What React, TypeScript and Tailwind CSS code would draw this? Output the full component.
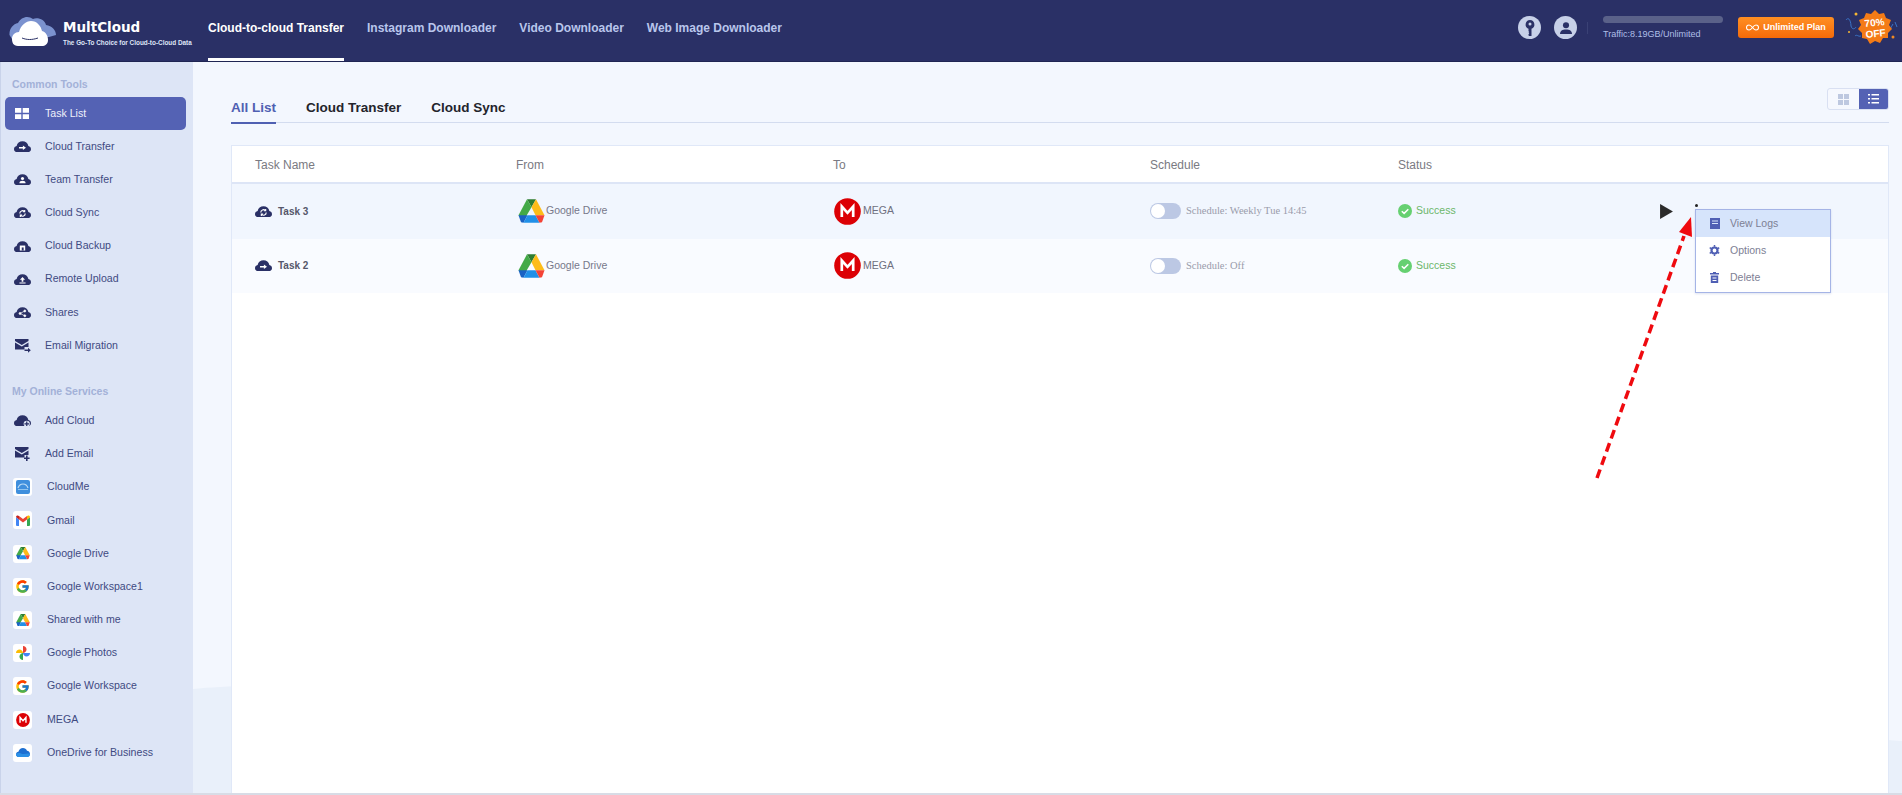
import React from "react";
import { FcGoogle } from "react-icons/fc";

const NAVY = "#2a3066";

function CloudIcon({ kind }: { kind: string }) {
  const cloud = "M4 15C1.800 15 0 13.400 0 11.200 0 9.200 1.400 7.600 3.400 7.200 4 3.400 7.200 1 11 1s7 2.400 7.600 6.200c2 .4 3.400 2 3.400 4 0 2.200-1.800 3.800-4 3.800z";
  return (
    <svg width="17" height="13" viewBox="0 0 22 15.500" className="shrink-0">
      <path d={cloud} fill={NAVY} />
      {kind === "transfer" && <path d="M6.500 8.300h5V6.300l4 3-4 3v-2h-5z" fill="#fff" />}
      {kind === "team" && (
        <g fill="#fff">
          <circle cx="11" cy="6.500" r="2" />
          <path d="M7 12.500c0-2 1.800-3 4-3s4 1 4 3z" />
        </g>
      )}
      {kind === "sync" && (
        <g fill="none" stroke="#fff" strokeWidth="1.500">
          <path d="M7.500 9a3.500 3.500 0 0 1 6-2.500" />
          <path d="M14.500 9a3.500 3.500 0 0 1-6 2.500" />
          <path d="M13.800 4.500v2.300h-2.300M8.200 13.500v-2.300h2.300" />
        </g>
      )}
      {kind === "backup" && (
        <g>
          <path d="M7.500 6.500h7v6.500h-7z" fill="#fff" />
          <path d="M10 9h2.500v4H10z" fill={NAVY} />
        </g>
      )}
      {kind === "upload" && <path d="M11 4.500l3.300 3.500h-2.200v2.500h-2.200V8H7.700zM7 11.500h8v1.300H7z" fill="#fff" />}
      {kind === "share" && (
        <g fill="#fff" stroke="#fff" strokeWidth=".9">
          <circle cx="7.800" cy="9" r="1.300" />
          <circle cx="14" cy="5.800" r="1.300" />
          <circle cx="14" cy="12" r="1.300" />
          <path d="M7.800 9L14 5.800M7.800 9L14 12" fill="none" />
        </g>
      )}
      {kind === "add" && (
        <g>
          <circle cx="16.500" cy="12" r="4" fill="#dde5f6" />
          <path d="M15.700 9h1.600v2.200h2.200v1.600h-2.200V15h-1.600v-2.200h-2.200v-1.600h2.200z" fill={NAVY} />
        </g>
      )}
    </svg>
  );
}

function MailIcon({ plus }: { plus?: boolean }) {
  return (
    <svg width="17" height="14" viewBox="0 0 17 14" className="shrink-0">
      <path d="M1 0h13.500v2L7.800 6 1 2zM1 3.600l6.800 4 6.700-4V8h-4v2.500H1z" fill={NAVY} />
      {plus ? (
        <path d="M12 8.500h1.600v2h2v1.500h-2v2H12v-2h-2v-1.500h2z" fill={NAVY} />
      ) : (
        <path d="M10.500 10.500h3.500V8.800l2.800 2.500-2.800 2.500v-1.700h-3.500z" fill={NAVY} />
      )}
    </svg>
  );
}

function DriveIcon({ size = 14 }: { size?: number }) {
  return (
    <svg width={size} height={size * 0.9} viewBox="0 0 27 24" className="shrink-0">
      <polygon points="9,0 18,0 13.500,8" fill="#2e7d32" />
      <polygon points="9,0 13.500,8 5.500,21.500 0.500,16" fill="#43a947" />
      <polygon points="18,0 26.500,16 17.500,16 13.500,8" fill="#fdbc19" />
      <polygon points="0.500,16 9.500,16 5.500,23.500 3,23" fill="#1a62c4" />
      <polygon points="9.500,16 17.500,16 21.500,23.500 5.500,23.500" fill="#2190e8" />
      <polygon points="17.500,16 26.500,16 24,23 21.500,23.500" fill="#f44336" />
    </svg>
  );
}

function MegaIcon({ size = 27 }: { size?: number }) {
  return (
    <svg width={size} height={size} viewBox="0 0 27 27" className="shrink-0">
      <circle cx="13.500" cy="13.500" r="13.300" fill="#dc0005" />
      <path d="M7.800 19V8.500l5.700 6.300 5.700-6.300V19" fill="none" stroke="#fff" strokeWidth="2.700" />
    </svg>
  );
}

function GmailIcon() {
  return (
    <svg width="14" height="11" viewBox="0 0 14 11">
      <path d="M0 2v8a1 1 0 0 0 1 1h2V4.500z" fill="#4285f4" />
      <path d="M14 2v8a1 1 0 0 1-1 1h-2V4.500z" fill="#34a853" />
      <path d="M3 4.500L7 7.500l4-3V1l-4 3L3 1z" fill="#ea4335" />
      <path d="M0 2c0-1.500 1.800-2 3-1v3.500z" fill="#c5221f" />
      <path d="M14 2c0-1.500-1.800-2-3-1v3.500z" fill="#fbbc04" />
    </svg>
  );
}

function PhotosIcon() {
  return (
    <svg width="14" height="14" viewBox="0 0 14 14">
      <path d="M7 7V0c2 0 3.500 1.500 3.500 3.500S8.500 7 7 7z" fill="#ea4335" />
      <path d="M7 7h7c0 2-1.500 3.500-3.500 3.500S7 8.500 7 7z" fill="#4285f4" />
      <path d="M7 7v7c-2 0-3.500-1.500-3.500-3.500S5.500 7 7 7z" fill="#34a853" />
      <path d="M7 7H0c0-2 1.500-3.500 3.500-3.500S7 5.500 7 7z" fill="#fbbc04" />
    </svg>
  );
}

function OneDriveIcon() {
  return (
    <svg width="14" height="9" viewBox="0 0 14 9">
      <path d="M3 9C1.300 9 0 7.900 0 6.400 0 5 1.100 4 2.400 3.800 3 1.600 4.700 0 7 0c1.800 0 3.300 1 4 2.700 1.700 .1 3 1.600 3 3.200C14 7.700 12.600 9 11 9z" fill="#1d6fd1" />
      <path d="M0 6.400C0 7.900 1.300 9 3 9h8c1.600 0 3-1.300 3-3.100-3-1-6 1-9-.5-2-.8-4-.5-5 .6z" fill="#2b8fe6" />
    </svg>
  );
}

function CloudMeIcon() {
  return (
    <svg width="14" height="14" viewBox="0 0 14 14">
      <rect width="14" height="14" rx="2" fill="#3f8fdd" />
      <path d="M2 8c1-3 3.500-4 5-4s4 1 5 4" fill="none" stroke="#bcdcf5" strokeWidth="1.200" />
      <path d="M2 9.500h10" stroke="#8fc3ee" strokeWidth="1" />
    </svg>
  );
}

type Item = { label: string; icon: React.ReactNode; white?: boolean };

const common: Item[] = [
  { label: "Cloud Transfer", icon: <CloudIcon kind="transfer" /> },
  { label: "Team Transfer", icon: <CloudIcon kind="team" /> },
  { label: "Cloud Sync", icon: <CloudIcon kind="sync" /> },
  { label: "Cloud Backup", icon: <CloudIcon kind="backup" /> },
  { label: "Remote Upload", icon: <CloudIcon kind="upload" /> },
  { label: "Shares", icon: <CloudIcon kind="share" /> },
  { label: "Email Migration", icon: <MailIcon /> },
];

const services: Item[] = [
  { label: "Add Cloud", icon: <CloudIcon kind="add" /> },
  { label: "Add Email", icon: <MailIcon plus /> },
  { label: "CloudMe", icon: <CloudMeIcon />, white: true },
  { label: "Gmail", icon: <GmailIcon />, white: true },
  { label: "Google Drive", icon: <DriveIcon />, white: true },
  { label: "Google Workspace1", icon: <FcGoogle size={15} />, white: true },
  { label: "Shared with me", icon: <DriveIcon />, white: true },
  { label: "Google Photos", icon: <PhotosIcon />, white: true },
  { label: "Google Workspace", icon: <FcGoogle size={15} />, white: true },
  { label: "MEGA", icon: <MegaIcon size={14} />, white: true },
  { label: "OneDrive for Business", icon: <OneDriveIcon />, white: true },
];

function SideRow({ item }: { item: Item }) {
  return (
    <div className="flex h-[33.200px] items-center pl-[12px] text-[10.600px] text-[#3f4a82]">
      {item.white ? (
        <span className="mr-[15px] flex h-[18px] w-[19px] items-center justify-center rounded-[3px] bg-white">{item.icon}</span>
      ) : (
        <span className="mr-[14px] flex w-[18px] justify-center">{item.icon}</span>
      )}
      <span>{item.label}</span>
    </div>
  );
}

function Check() {
  return (
    <svg width="14" height="14" viewBox="0 0 14 14" className="shrink-0">
      <circle cx="7" cy="7" r="7" fill="#66d071" />
      <path d="M3.800 7.200l2.300 2.200 4.200-4.200" fill="none" stroke="#fff" strokeWidth="1.500" />
    </svg>
  );
}

function TaskRow({ name, kind, schedule, bg, children }: { name: string; kind: string; schedule: string; bg: string; children?: React.ReactNode }) {
  return (
    <div className={`relative grid h-[54.500px] grid-cols-[261px_317px_317px_248px_262px_1fr] items-center pl-[23px] ${bg}`}>
      <div className="flex items-center gap-[6px] text-[10px] font-bold text-[#55576a]">
        <CloudIcon kind={kind} />
        <span>{name}</span>
      </div>
      <div className="flex items-center pl-[2px] text-[10.500px] text-[#77788a]">
        <DriveIcon size={27} />
        <span className="ml-[1px]">Google Drive</span>
      </div>
      <div className="flex items-center pl-[1px] text-[10.500px] text-[#6f7080]">
        <MegaIcon />
        <span className="ml-[2px]">MEGA</span>
      </div>
      <div className="flex items-center gap-[5px] font-['Liberation_Serif',serif] text-[10.500px] text-[#9a9cab]">
        <span className="flex h-[16px] w-[31px] items-center rounded-full bg-[#bcc8e4] pl-[1px]">
          <span className="h-[14px] w-[14px] rounded-full bg-white" />
        </span>
        <span>{schedule}</span>
      </div>
      <div className="flex items-center gap-[4px] text-[10.500px] text-[#6cb76a]">
        <Check />
        <span>Success</span>
      </div>
      {children}
    </div>
  );
}

function MenuRow({ label, icon, active }: { label: string; icon: React.ReactNode; active?: boolean }) {
  return (
    <div className={`flex h-[27px] items-center pl-[13px] text-[10.500px] text-[#7d8094] ${active ? "bg-[#d6e4fb]" : ""}`}>
      <span className="mr-[10px] flex w-[11px] justify-center">{icon}</span>
      <span>{label}</span>
    </div>
  );
}

export default function App() {
  return (
    <div className="relative flex h-[795px] w-[1902px] flex-col overflow-hidden border-b-2 border-[#d8dce6] bg-[#f3f7fe] font-['Liberation_Sans',Arial,sans-serif]">
      <header className="flex h-[62px] shrink-0 items-center border-b border-[#1f2553] bg-[#2a3066]">
        <div className="flex w-[208px] shrink-0 items-center pl-[9px]">
          <svg width="48" height="31" viewBox="0 0 48 31" className="mr-[6px] mt-[2px] shrink-0">
            <path d="M0.500 19C0 13 4 8 9 7 12 1 19-1 24 3 29 1 36 4 37 9 43 10 47 14 47 19L40 21 3 23z" fill="#7b92cf" />
            <path d="M9 30C4 30 3 26 3 23 3 19 6 16 10 16 12 9 17 5 22 5 28 5 32 10 33 15 37 16 39 20 39 24 39 28 36 30 33 30z" fill="#fff" />
            <path d="M13 22c5 2 10 2 16 0" fill="none" stroke="#2a3066" strokeWidth="1" />
          </svg>
          <div className="mt-[5px] flex flex-col whitespace-nowrap text-white">
            <span className="font-['DejaVu_Sans',sans-serif] text-[13.500px] font-bold leading-[17px]">MultCloud</span>
            <span className="mt-[2px] text-[6.400px] font-bold leading-[9px] text-[#dfe5f6]">The Go-To Choice for Cloud-to-Cloud Data</span>
          </div>
        </div>
        <nav className="flex h-full items-center gap-[23px] text-[12px] font-bold text-[#b9c6ec]">
          <div className="relative flex h-full items-center pb-[5px] text-white">
            Cloud-to-cloud Transfer
            <span className="absolute bottom-0 left-0 h-[3px] w-full bg-white" />
          </div>
          <div className="pb-[5px]">Instagram Downloader</div>
          <div className="pb-[5px]">Video Downloader</div>
          <div className="pb-[5px]">Web Image Downloader</div>
        </nav>
        <div className="ml-auto flex items-center pb-[6px] pr-[2px]">
          <span className="flex h-[23px] w-[23px] items-center justify-center rounded-full bg-[#c7d0e8]">
            <svg width="10" height="16" viewBox="0 0 10 16">
              <path fillRule="evenodd" d="M5 0a4.500 4.500 0 0 1 1.500 8.700V16H4l-.5-.8v-1l.8-.7-.8-.7 .8-.8-.8-.8V8.700A4.500 4.500 0 0 1 5 0zm0 2.500a1.500 1.500 0 1 0 0 3 1.500 1.500 0 0 0 0-3z" fill={NAVY} />
            </svg>
          </span>
          <span className="ml-[13px] flex h-[23px] w-[23px] items-center justify-center rounded-full bg-[#c7d0e8]">
            <svg width="12" height="12" viewBox="0 0 13 13">
              <circle cx="6.500" cy="3.500" r="3.300" fill={NAVY} />
              <path d="M0 13c0-3.500 2.500-5 6.500-5s6.500 1.500 6.500 5z" fill={NAVY} />
            </svg>
          </span>
          <span className="ml-[10px] h-[12px] w-px bg-[#3a4175]" />
          <div className="ml-[15px] flex w-[120px] flex-col">
            <span className="h-[7px] w-full rounded-full bg-[#5a6189]" />
            <span className="mt-[5px] text-[9px] leading-[12px] text-[#afbfe6]">Traffic:8.19GB/Unlimited</span>
          </div>
          <div className="ml-[15px] flex h-[21px] w-[96px] items-center justify-center gap-[4px] rounded-[3px] bg-gradient-to-b from-[#ff8f22] to-[#f46a08] text-[9px] font-bold text-white">
            <svg width="13" height="7" viewBox="0 0 13 7">
              <path d="M6.500 3.500C5 1.500 4 1 3 1a2.500 2.500 0 0 0 0 5c1 0 2-.5 3.500-2.500S9 1 10 1a2.500 2.500 0 0 1 0 5c-1 0-2-.5-3.500-2.500z" fill="none" stroke="#fff" strokeWidth="1.100" />
            </svg>
            Unlimited Plan
          </div>
          <div className="relative ml-[11px] flex h-[36px] w-[55px] items-center justify-center">
            <svg width="55" height="36" viewBox="0 0 55 36" className="absolute left-0 top-0">
              <path d="M1 10c3-4 5 2 5 6 1 4 4 3 5 1M10 26c2-2 3 1 6 0M48 14c-2 3-2 5-5 7M50 12l2 5" fill="none" stroke="#3a74c8" strokeWidth="1" />
              <circle cx="11" cy="4" r="1.500" fill="#f7b733" />
              <circle cx="48" cy="27" r="1.500" fill="#f08a24" />
              <circle cx="4" cy="22" r="1" fill="#f7b733" />
              <polygon points="30,0 34,4 39,3 41,8 46,10 44,15 47,19 43,23 43,28 38,28 35,33 30,31 25,34 22,29 17,28 17,23 13,19 16,15 14,10 19,8 21,3 26,4" fill="#f47b16" />
            </svg>
            <div className="relative ml-[5px] flex -rotate-6 flex-col items-center text-[10px] font-bold leading-[11px] text-white">
              <span>70%</span>
              <span>OFF</span>
            </div>
          </div>
        </div>
      </header>

      <div className="flex min-h-0 flex-1">
        <aside className="w-[193px] shrink-0 border-l border-[#c9d3ea] bg-[#dde5f6]">
          <div className="mt-[16px] pl-[11px] text-[10.500px] font-bold leading-[13px] text-[#a3b1d8]">Common Tools</div>
          <div className="ml-[4px] mr-[7px] mt-[6px] flex h-[33px] items-center rounded-[5px] bg-[#5462b4] pl-[10px] text-[10.600px] text-[#eef1fb]">
            <svg width="14" height="11" viewBox="0 0 14 11" className="mr-[16px]">
              <path d="M0 0h6.300v4.700H0zM7.700 0H14v4.700H7.700zM0 6.300h6.300V11H0zM7.700 6.300H14V11H7.700z" fill="#fff" />
            </svg>
            Task List
          </div>
          {common.map((i) => <SideRow key={i.label} item={i} />)}
          <div className="mb-[6px] mt-[23px] pl-[11px] text-[10.500px] font-bold leading-[13px] text-[#a3b1d8]">My Online Services</div>
          {services.map((i) => <SideRow key={i.label} item={i} />)}
        </aside>

        <main className="relative min-w-0 flex-1 pl-[38px] pr-[13px] pt-[26px]">
          <svg className="absolute bottom-0 left-0" width="1709" height="110" viewBox="0 0 1709 110">
            <path d="M0 6C80-2 300 0 800 20 1300 40 1600 50 1709 58V110H0z" fill="#e9f0fa" />
          </svg>
          <div className="relative flex h-[35px] items-start border-b border-[#d3dcef] text-[13.500px] font-bold text-[#23242c]">
            <div className="relative h-[35px] pt-[10px] text-[#4f60b2]">
              All List
              <span className="absolute -bottom-px left-0 h-[2px] w-full bg-[#4f60b2]" />
            </div>
            <div className="ml-[30px] pt-[10px]">Cloud Transfer</div>
            <div className="ml-[30px] pt-[10px]">Cloud Sync</div>
            <div className="absolute right-0 top-0 flex h-[22px] w-[62px] overflow-hidden rounded-[3px] border border-[#d9e0f2] bg-[#f6f8fe]">
              <span className="flex w-[31px] items-center justify-center">
                <svg width="11" height="11" viewBox="0 0 11 11"><path d="M0 0h5v5H0zM6 0h5v5H6zM0 6h5v5H0zM6 6h5v5H6z" fill="#bec8e0" /></svg>
              </span>
              <span className="flex flex-1 items-center justify-center bg-[#5462b4]">
                <svg width="11" height="10" viewBox="0 0 11 10"><path d="M0 0h2v1.600H0zM3.500 0H11v1.600H3.500zM0 4h2v1.600H0zM3.500 4H11v1.600H3.500zM0 8h2v1.600H0zM3.500 8H11v1.600H3.500z" fill="#fff" /></svg>
              </span>
            </div>
          </div>

          <div className="relative mt-[22px] h-[660px] border border-[#e0e8f8] bg-white">
            <div className="grid h-[38px] grid-cols-[261px_317px_317px_248px_262px_1fr] items-center border-b-2 border-[#dde5f6] pl-[23px] pt-[1px] text-[12px] text-[#7a7a82]">
              <span>Task Name</span>
              <span>From</span>
              <span>To</span>
              <span>Schedule</span>
              <span>Status</span>
            </div>
            <TaskRow name="Task 3" kind="sync" schedule="Schedule: Weekly Tue 14:45" bg="bg-[#f1f6fe]">
              <svg width="13" height="15" viewBox="0 0 12 14"><path d="M0 0l12 7-12 7z" fill="#2b2b2b" /></svg>
              <div className="absolute left-[1463px] top-[20px] z-10 flex flex-col items-center gap-[2px]">
                <span className="h-[3px] w-[3px] rounded-full bg-[#222]" />
                <span className="h-[2px] w-[2px] rounded-full bg-[#222]" />
              </div>
              <div className="absolute left-[1463px] top-[25px] z-10 w-[136px] border border-[#a5b4e6] bg-white pb-[1px] shadow-[0_1px_2px_rgba(90,110,180,0.2)]">
                <MenuRow active label="View Logs" icon={<svg width="10" height="11" viewBox="0 0 10 11"><path fillRule="evenodd" d="M0 0h10v11H0zM2 2.500v1h6v-1zM2 5v1h6V5z" fill="#4f5fb4" /></svg>} />
                <MenuRow label="Options" icon={<svg width="11" height="11" viewBox="0 0 11 11"><circle cx="5.500" cy="5.500" r="3" fill="none" stroke="#4f5fb4" strokeWidth="2.200" /><path d="M5.500 0v11M0.700 2.700l9.600 5.600M0.700 8.300l9.600-5.600" stroke="#4f5fb4" strokeWidth="1.500" strokeDasharray="1.800 7.400" /></svg>} />
                <MenuRow label="Delete" icon={<svg width="9" height="11" viewBox="0 0 9 11"><path fillRule="evenodd" d="M3 0h3v1h3v1.500H0V1h3zM.8 3.500h7.400V11H.8zM2.500 5.500v1h4v-1zM2.500 8v1h4V8z" fill="#4f5fb4" /></svg>} />
              </div>
            </TaskRow>
            <TaskRow name="Task 2" kind="transfer" schedule="Schedule: Off" bg="bg-[#f9fbff]" />
          </div>
        </main>
      </div>

      <svg className="pointer-events-none absolute left-0 top-0 z-20" width="1902" height="795" viewBox="0 0 1902 795">
        <line x1="1597" y1="478" x2="1684" y2="236" stroke="#ef0a0f" strokeWidth="3.500" strokeDasharray="9 5" />
        <polygon points="1691,217 1692,237 1679,232" fill="#ef0a0f" />
      </svg>
    </div>
  );
}
